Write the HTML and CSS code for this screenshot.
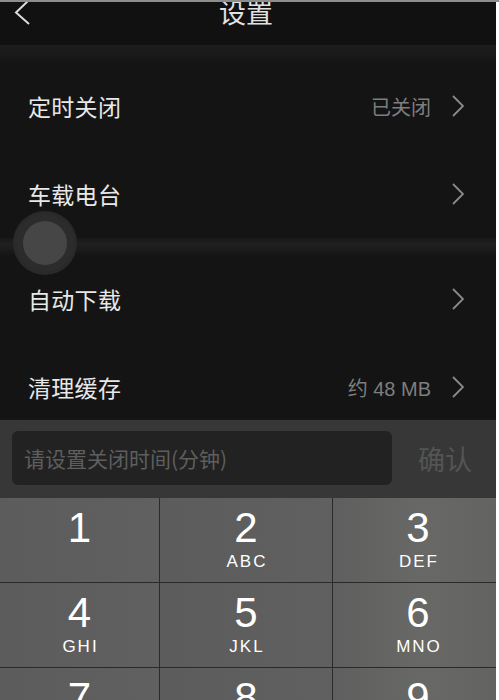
FILE: index.html
```html
<!DOCTYPE html>
<html lang="zh-CN">
<head>
<meta charset="utf-8">
<title>设置</title>
<link rel="stylesheet" href="styles.css">
</head>
<body>
<div class="topline"></div>
<div class="app">
  <header class="header">
    <div class="back">
      <svg width="18" height="28" viewBox="0 0 18 28"><polyline points="15,1 3,12.5 16,24" fill="none" stroke="#dcdcdc" stroke-width="2"/></svg>
    </div>
    <div class="title">设置</div>
    <div></div>
  </header>
  <main class="list">
    <div class="spacer"></div>
    <div class="row">
      <span class="label">定时关闭</span>
      <span class="value">已关闭</span>
      <svg class="chev" width="12" height="22" viewBox="0 0 12 22"><polyline points="1,1 11,11 1,21" fill="none" stroke="#8a8a8a" stroke-width="1.8"/></svg>
    </div>
    <div class="row">
      <span class="label">车载电台</span>
      <svg class="chev" width="12" height="22" viewBox="0 0 12 22"><polyline points="1,1 11,11 1,21" fill="none" stroke="#8a8a8a" stroke-width="1.8"/></svg>
    </div>
    <div class="band"></div>
    <div class="row">
      <span class="label">自动下载</span>
      <svg class="chev" width="12" height="22" viewBox="0 0 12 22"><polyline points="1,1 11,11 1,21" fill="none" stroke="#8a8a8a" stroke-width="1.8"/></svg>
    </div>
    <div class="row">
      <span class="label">清理缓存</span>
      <span class="value">约 48 MB</span>
      <svg class="chev" width="12" height="22" viewBox="0 0 12 22"><polyline points="1,1 11,11 1,21" fill="none" stroke="#8a8a8a" stroke-width="1.8"/></svg>
    </div>
  </main>
  <div class="assist"><div class="assist-dot"></div></div>
  <section class="keyboard">
    <div class="inputbar">
      <div class="field">请设置关闭时间(分钟)</div>
      <div class="confirm">确认</div>
    </div>
    <div class="keypad">
      <div class="key"><span class="digit">1</span></div>
      <div class="key"><span class="digit">2</span><span class="letters">ABC</span></div>
      <div class="key k3"><span class="digit">3</span><span class="letters">DEF</span></div>
      <div class="key"><span class="digit">4</span><span class="letters">GHI</span></div>
      <div class="key"><span class="digit">5</span><span class="letters">JKL</span></div>
      <div class="key k3"><span class="digit">6</span><span class="letters">MNO</span></div>
      <div class="key"><span class="digit">7</span><span class="letters">PQRS</span></div>
      <div class="key"><span class="digit">8</span><span class="letters">TUV</span></div>
      <div class="key k3"><span class="digit">9</span><span class="letters">WXYZ</span></div>
    </div>
  </section>
</div>
</body>
</html>
```
FILE: styles.css
```css
html, body {
  margin: 0;
  padding: 0;
  background: #ffffff;
}
body {
  width: 499px;
  height: 700px;
  overflow: hidden;
  font-family: "Noto Sans CJK SC", "Noto Sans", sans-serif;
}
.topline {
  height: 2px;
  background: #8d8d8d;
}
.app {
  position: relative;
  width: 496px;
  height: 698px;
  overflow: hidden;
  background: #141414;
}
.header {
  height: 43px;
  background: #111111;
  display: grid;
  grid-template-columns: 1fr auto 1fr;
}
.back {
  padding-left: 13px;
  margin-top: -2px;
}
.back svg {
  display: block;
}
.title {
  margin-top: -4px;
  margin-right: 4px;
  font-size: 27px;
  line-height: 27px;
  color: #e2e2e2;
}
.list {
  display: flex;
  flex-direction: column;
}
.spacer {
  height: 17px;
  background: linear-gradient(#1d1d1d, #161616);
}
.row {
  height: 88px;
  display: flex;
  align-items: center;
  padding: 0 32px 0 28px;
  background: #141414;
}
.label {
  flex: 1;
  font-size: 23px;
  color: #e8e8e8;
  letter-spacing: 0.3px;
}
.value {
  font-size: 20px;
  color: #7e7e7e;
  margin-right: 21px;
  font-family: "Liberation Sans", "Noto Sans CJK SC", sans-serif;
}
.value-num {
  font-size: 21px;
}
.chev {
  display: block;
}
.band {
  height: 17px;
  background: linear-gradient(#181818 0%, #202020 35%, #1c1c1c 65%, #151515 100%);
}
.assist {
  position: absolute;
  left: 13px;
  top: 209px;
  width: 64px;
  height: 64px;
  border-radius: 50%;
  background: radial-gradient(circle, #2c2c2c 60%, #252525 80%, rgba(30,30,30,0.4) 100%);
  display: flex;
  align-items: center;
  justify-content: center;
}
.assist-dot {
  width: 44px;
  height: 44px;
  border-radius: 50%;
  background: #464646;
}
.keyboard {
  position: absolute;
  left: 0;
  right: 0;
  top: 416px;
  bottom: 0;
  border-top: 2px solid #161616;
}
.inputbar {
  height: 78px;
  background: #373737;
  display: flex;
  align-items: center;
  padding-left: 12px;
}
.field {
  width: 368px;
  height: 54px;
  padding-left: 12px;
  margin-top: -2px;
  border-radius: 6px;
  background: #222222;
  display: flex;
  align-items: center;
  font-size: 21px;
  color: #5e5e5e;
}
.confirm {
  flex: 1;
  text-align: center;
  font-size: 27px;
  color: #545454;
  margin-top: -2px;
  padding-left: 2px;
}
.keypad {
  display: grid;
  grid-template-columns: 159px 172px 1fr;
  grid-auto-rows: 84px;
  gap: 1px;
  background: #2a2a2a;
}
.key {
  background: linear-gradient(90deg, #5c5c5c, #606060);
  display: flex;
  flex-direction: column;
  align-items: center;
  color: #ffffff;
  font-family: "Liberation Sans", Arial, sans-serif;
}
.key.k3 {
  padding-left: 7px;
  background: linear-gradient(90deg, #5f5f5f 0%, #686866 55%, #636362 100%);
}
.digit {
  margin-top: 9px;
  font-size: 42px;
  line-height: 42px;
}
.letters {
  margin-top: 4px;
  font-size: 17px;
  line-height: 17px;
  letter-spacing: 2px;
  padding-left: 2px;
}
```
